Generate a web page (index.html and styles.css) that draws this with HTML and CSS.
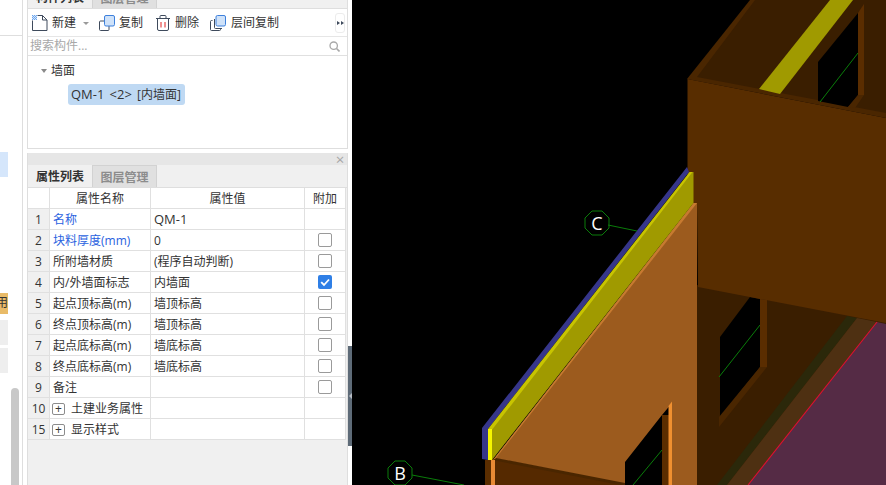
FILE: index.html
```html
<!DOCTYPE html>
<html lang="zh">
<head>
<meta charset="utf-8">
<title>构件列表</title>
<link rel="stylesheet" href="styles.css">
</head>
<body>
<div class="app">
  <aside class="side">
    <div class="side-head"></div>
    <div class="side-item side-blue"></div>
    <div class="side-item side-orange"><span class="side-glyph">用</span></div>
    <div class="side-item side-gray side-gray-a"></div>
    <div class="side-item side-gray side-gray-b"></div>
    <div class="side-scroll"></div>
  </aside>

  <div class="panels">
    <section class="panel panel-top">
      <div class="tabs">
        <div class="tab tab-on">构件列表</div>
        <div class="tab tab-off">图层管理</div>
      </div>
      <div class="toolbar">
        <svg class="ico ico-new" viewBox="0 0 16 16"><rect x="0" y="0" width="5" height="5" fill="#6aa5ee"/><path d="M1 0h1v1H1zM3 0h1v1H3zM0 1h1v1H0zM2 1h1v1H2zM4 1h1v1H4zM1 2h1v1H1zM3 2h1v1H3zM0 3h1v1H0zM2 3h1v1H2zM4 3h1v1H4zM1 4h1v1H1zM3 4h1v1H3z" fill="#d9e8fb"/><path d="M5.500 .5H10.500L15 5V15.500H.5V5.500M10.500 .5V5H15" fill="none" stroke="#3e4a5c" stroke-width="1"/></svg>
        <span class="tl tl-new">新建</span>
        <span class="caret"></span>
        <svg class="ico ico-copy" viewBox="0 0 16 16"><path d="M5 6H1.500A1 1 0 0 0 .5 7V14.500A1 1 0 0 0 1.500 15.500H9A1 1 0 0 0 10 14.500V11" fill="none" stroke="#3e4a5c"/><rect x="5.500" y=".5" width="10" height="10.500" rx="1.500" fill="#cfe2f9" stroke="#3d80dc"/></svg>
        <span class="tl tl-copy">复制</span>
        <svg class="ico ico-del" viewBox="0 0 16 16"><path d="M1 3.500H15M5 3.500V1.500A1 1 0 0 1 6 .5H10A1 1 0 0 1 11 1.500V3.500M2.500 3.500V14A1.500 1.500 0 0 0 4 15.500H12A1.500 1.500 0 0 0 13.500 14V3.500" fill="none" stroke="#3e4a5c"/><path d="M6 7V12.500M10 7V12.500" stroke="#e02020" fill="none"/></svg>
        <span class="tl tl-del">删除</span>
        <svg class="ico ico-floor" viewBox="0 0 16 16"><path d="M2.500 5.500H1.500A1 1 0 0 0 .5 6.500V14.500A1 1 0 0 0 1.500 15.500H9.500A1 1 0 0 0 10.500 14.500V14M4.500 4V12.500A1 1 0 0 0 5.500 13.500H12" fill="none" stroke="#3e4a5c"/><rect x="6" y=".5" width="9.500" height="10.500" rx="1.500" fill="#cfe2f9" stroke="#3d80dc"/></svg>
        <span class="tl tl-floor">层间复制</span>
        <span class="more"><i class="tri"></i><i class="tri"></i></span>
      </div>
      <div class="search">
        <span class="search-text">搜索构件...</span>
        <svg class="ico-search" viewBox="0 0 11 11"><circle cx="4.700" cy="4.700" r="3.700" fill="none" stroke="#a8a8a8" stroke-width="1.300"/><path d="M7.500 7.500L10.500 10.500" stroke="#a8a8a8" stroke-width="1.600"/></svg>
      </div>
      <div class="tree">
        <div class="tree-root"><span class="tree-caret"></span><span>墙面</span></div>
        <div class="tree-leaf"><span class="leaf-pill"><span class="lat">QM-1</span> <span class="lat leaf-gap">&lt;2&gt;</span> [内墙面]</span></div>
      </div>
    </section>

    <section class="panel panel-bottom">
      <div class="grip"><span class="close">×</span></div>
      <div class="tabs">
        <div class="tab tab-on">属性列表</div>
        <div class="tab tab-off">图层管理</div>
      </div>
      <table class="props">
        <thead>
          <tr><th class="c-num c-blank"></th><th class="c-name">属性名称</th><th class="c-val">属性值</th><th class="c-add">附加</th></tr>
        </thead>
        <tbody>
          <tr><td class="c-num">1</td><td class="c-name link">名称</td><td class="c-val"><span class="lat">QM-1</span></td><td class="c-add"></td></tr>
          <tr><td class="c-num">2</td><td class="c-name link">块料厚度(mm)</td><td class="c-val">0</td><td class="c-add"><span class="cb"></span></td></tr>
          <tr><td class="c-num">3</td><td class="c-name">所附墙材质</td><td class="c-val">(程序自动判断)</td><td class="c-add"><span class="cb"></span></td></tr>
          <tr><td class="c-num">4</td><td class="c-name">内/外墙面标志</td><td class="c-val">内墙面</td><td class="c-add"><span class="cb cb-on"><svg viewBox="0 0 14 14"><path d="M3.200 7.200L6 10L11 4.500" fill="none" stroke="#fff" stroke-width="1.800"/></svg></span></td></tr>
          <tr><td class="c-num">5</td><td class="c-name">起点顶标高(m)</td><td class="c-val">墙顶标高</td><td class="c-add"><span class="cb"></span></td></tr>
          <tr><td class="c-num">6</td><td class="c-name">终点顶标高(m)</td><td class="c-val">墙顶标高</td><td class="c-add"><span class="cb"></span></td></tr>
          <tr><td class="c-num">7</td><td class="c-name">起点底标高(m)</td><td class="c-val">墙底标高</td><td class="c-add"><span class="cb"></span></td></tr>
          <tr><td class="c-num">8</td><td class="c-name">终点底标高(m)</td><td class="c-val">墙底标高</td><td class="c-add"><span class="cb"></span></td></tr>
          <tr><td class="c-num">9</td><td class="c-name">备注</td><td class="c-val"></td><td class="c-add"><span class="cb"></span></td></tr>
          <tr><td class="c-num">10</td><td class="c-name"><span class="plus">+</span>土建业务属性</td><td class="c-val"></td><td class="c-add"></td></tr>
          <tr><td class="c-num">15</td><td class="c-name"><span class="plus">+</span>显示样式</td><td class="c-val"></td><td class="c-add"></td></tr>
        </tbody>
      </table>
      <div class="props-rest"></div>
    </section>
  </div>

  <div class="splitter"><span class="splitter-bar"><i class="splitter-tri"></i></span></div>

  <svg class="scene" viewBox="352 0 534 485" preserveAspectRatio="none">
    <rect x="352" y="0" width="534" height="485" fill="#000"/>

    <!-- upper room -->
    <polygon points="750,0 886,0 886,118 687,79" fill="#4a2600"/>
    <polygon points="755,0 886,0 886,113 697,77" fill="#3a1e00"/>
    <polygon points="818,62 858,13 858,95 848,107 818,101" fill="#000"/>
    <line x1="820" y1="102" x2="858" y2="53" stroke="#0a7d0a"/>
    <polygon points="858,13 864,4 864,95 858,95" fill="#5a2d00"/>
    <polygon points="858,95 864,95 855,108 848,107" fill="#4a2600"/>
    <polygon points="759,89 780,94 853,0 830,0" fill="#a09a00"/>

    <!-- lower room and floor -->
    <polygon points="697,285 886,321 886,485 697,485" fill="#3a1e00"/>
    <polygon points="847,316 857,318 727,485 717,485" fill="#2b280a"/>
    <polygon points="857,318 877,322 748,485 727,485" fill="#4e3012"/>
    <polygon points="877,322 886,324 886,485 748,485" fill="#552b45"/>
    <line x1="877" y1="322" x2="748" y2="485" stroke="#e01030" stroke-width="1.100"/>
    <polygon points="720,337 750,297 760,299 760,367 720,417" fill="#000"/>
    <line x1="719" y1="377" x2="760" y2="325" stroke="#0a7d0a"/>
    <polygon points="760,299 767,300 767,367 760,367" fill="#5a2d00"/>
    <polygon points="760,367 767,367 719,427 719,417" fill="#4a2600"/>

    <!-- front wall of upper room -->
    <polygon points="687.500,79 886,118 886,323 698,287 697,205 687.500,205" fill="#582d00"/>

    <!-- lower left wall -->
    <polygon points="485,460 497,458 625,483 625,485 485,485" fill="#552900"/>
    <polygon points="492,460 497,458 625,482 632,485 620,485" fill="#4a2600"/>
    <rect x="485" y="460" width="6" height="25" fill="#5a2d00"/>
    <rect x="491" y="460" width="4" height="25" fill="#e88a35"/>
    <polygon points="625,462 662,415 662,485 625,485" fill="#000"/>
    <line x1="662" y1="450" x2="633" y2="485" stroke="#0a7d0a"/>
    <polygon points="493,460 693.500,203 697,203 697,485 672,485 672,403 662,415 625,462 625,483 496,458" fill="#9c5b1e"/>
    <rect x="662" y="415" width="7" height="70" fill="#5a2d00"/>
    <polygon points="668.500,406 672,401.500 672,485 668.500,485" fill="#f09030"/>
    <polygon points="493,460 693.500,203 697,203 496,458" fill="#c77a30"/>

    <!-- cap strip -->
    <polygon points="482,428 687,167 689,172 488,429 488,460 482,459" fill="#36368a"/>
    <polygon points="490,429 691,172 693.500,172 693.500,203 492,460" fill="#a09a00"/>
    <polygon points="488,429 689.500,172 692.500,172 491,431" fill="#c8c400"/>
    <rect x="488" y="429" width="4" height="31" fill="#f5f500"/>

    <!-- axis bubbles -->
    <line x1="608" y1="225" x2="637" y2="231" stroke="#0a7d0a"/>
    <polygon points="592,211 602,211 609,218 609,228 602,235 592,235 585,228 585,218" fill="none" stroke="#0a7d0a"/>
    <text class="axis" x="597" y="229.500">C</text>
    <line x1="412" y1="475" x2="464" y2="485" stroke="#0a7d0a"/>
    <polygon points="395,461 405,461 412,468 412,478 405,485 395,485 388,478 388,468" fill="none" stroke="#0a7d0a"/>
    <text class="axis" x="400" y="479.500">B</text>
  </svg>
</div>
</body>
</html>
```

FILE: styles.css
```css
* { box-sizing: border-box; }
html, body { margin: 0; padding: 0; height: 100%; overflow: hidden; background: #fff; }
body { font-family: "Open Sans", "Noto Sans CJK SC", sans-serif; font-size: 12px; color: #333; }

.app { display: flex; width: 886px; height: 485px; overflow: hidden; }
.lat { font-size: 13px; line-height: 1; }

/* far-left clipped list */
.side { position: relative; flex: 0 0 23px; height: 485px; border-right: 1px solid #dedede; margin-right: 4px; }
.side-head { height: 36px; border-bottom: 1px solid #dedede; }
.side-item { width: 8px; overflow: hidden; }
.side-blue { height: 25px; margin-top: 116px; background: #d5e6fb; }
.side-orange { height: 21px; margin-top: 116px; background: #e9bb68; position: relative; }
.side-glyph { position: absolute; right: 0; top: 2px; line-height: 16px; color: #333; }
.side-gray { height: 25px; background: #eeeeee; }
.side-gray-a { margin-top: 6px; }
.side-gray-b { margin-top: 3px; }
.side-scroll { position: absolute; left: 11px; top: 388px; width: 8px; height: 110px; border-radius: 4px; background: #c8c8c8; }

/* panels */
.panels { flex: 0 0 321px; display: flex; flex-direction: column; height: 485px; }
.panel { border-left: 1px solid #dedede; border-right: 1px solid #dedede; background: #fff; }
.panel-top { margin-top: -14px; height: 163px; flex: none; border-bottom: 1px solid #dedede; display: flex; flex-direction: column; }
.panel-bottom { margin-top: 4px; flex: 1; min-height: 0; display: flex; flex-direction: column; background: #f0f0f0; }

.tabs { display: flex; height: 23px; flex: none; background: #f0f0f0; border-bottom: 1px solid #dedede; }
.tab { width: 64px; height: 22px; line-height: 24px; text-align: center; font-weight: 700; }
.tab-on { color: #333; background: #f0f0f0; }
.tab-off { width: 65px; color: #8c8c8c; background: #e0e0e0; border: 1px solid #d2d2d2; border-bottom: 0; }

.toolbar { display: flex; align-items: center; height: 28px; flex: none; border-bottom: 1px solid #e6e6e6; padding-left: 4px; }
.ico { width: 16px; height: 16px; flex: none; display: block; overflow: visible; }
.tl { line-height: 16px; color: #333; }
.tl-new { margin-left: 4px; }
.caret { width: 0; height: 0; margin: 1px 0 0 7px; border-left: 3px solid transparent; border-right: 3px solid transparent; border-top: 3px solid #9a9a9a; }
.ico-copy { margin-left: 10px; }
.ico-del { margin-left: 12px; }
.ico-floor { margin-left: 11px; }
.tl-copy, .tl-del { margin-left: 4px; }
.tl-floor { margin-left: 5px; }
.more { margin-left: auto; margin-right: 2px; width: 10px; height: 20px; border: 1px solid #ececec; border-radius: 3px; display: flex; align-items: center; justify-content: center; gap: 1px; }
.tri { display: block; width: 0; height: 0; border-top: 2.500px solid transparent; border-bottom: 2.500px solid transparent; border-left: 3px solid #3e4a5c; }

.search { display: flex; align-items: center; justify-content: space-between; height: 19px; flex: none; border-bottom: 1px solid #e0e0e0; padding: 0 7px 0 2px; }
.search-text { color: #a8a8a8; line-height: 18px; }
.ico-search { width: 11px; height: 11px; display: block; }

.tree { flex: 1; min-height: 0; background: #fff; }
.tree-root { display: flex; align-items: center; height: 28px; padding-left: 13px; }
.tree-caret { width: 0; height: 0; margin: 1px 4px 0 0; border-left: 3px solid transparent; border-right: 3px solid transparent; border-top: 4px solid #8a8a8a; }
.tree-leaf { padding: 0 0 0 40px; }
.leaf-pill { display: inline-block; height: 21px; line-height: 21px; padding: 0 4px 0 3px; border-radius: 3px; background: #bfd9f3; white-space: nowrap; }
.leaf-gap { margin: 0 2px; }

.grip { position: relative; height: 12px; flex: none; background: #e6e6e6; }
.close { position: absolute; right: 1px; top: 0; width: 12px; height: 12px; line-height: 12px; text-align: center; font-size: 15px; color: #a6a6a6; }

.props { width: 318px; flex: none; table-layout: fixed; border-collapse: separate; border-spacing: 0; background: #fff; }
.props th, .props td { height: 21px; padding: 2px 0 0; border-right: 1px solid #e0e0e0; border-bottom: 1px solid #e0e0e0; font-weight: 400; line-height: 18px; white-space: nowrap; overflow: hidden; }
.props td.c-add { padding: 0; line-height: 20px; }
.props th { text-align: center; }
.c-num { width: 22px; background: #f0f0f0; text-align: center; }
.c-blank { background: #fff; }
.c-name { width: 101px; padding-left: 3px !important; }
th.c-name { padding-left: 0 !important; }
.c-val { width: 154px; padding-left: 3px !important; }
th.c-val { padding-left: 0 !important; }
.c-add { width: 41px; text-align: center; }
.link { color: #2a62e0; }

.cb { display: block; width: 14px; height: 14px; margin: 0 auto; border: 1px solid #9a9a9a; border-radius: 2px; background: #fff; }
.cb-on { border: 0; background: #2f7fe6; }
.cb-on svg { display: block; width: 14px; height: 14px; }
.plus { display: inline-block; width: 13px; height: 12px; margin: 0 6px 0 -1px; border: 1px solid #8c8c8c; border-radius: 2px; line-height: 9px; text-align: center; font-size: 12px; vertical-align: 0; }

.props-rest { flex: 1; min-height: 0; }

.splitter { flex: 0 0 4px; height: 485px; background: #fff; }
.splitter-bar { display: flex; align-items: center; justify-content: center; width: 4px; height: 100px; margin-top: 346px; background: #5e6b78; }
.splitter-tri { display: block; width: 0; height: 0; border-top: 3px solid transparent; border-bottom: 3px solid transparent; border-right: 3px solid #b5bcc4; }

.scene { flex: 0 0 534px; width: 534px; height: 485px; display: block; }
.axis { fill: #fff; font-family: "Open Sans", sans-serif; font-size: 18px; text-anchor: middle; }
```
